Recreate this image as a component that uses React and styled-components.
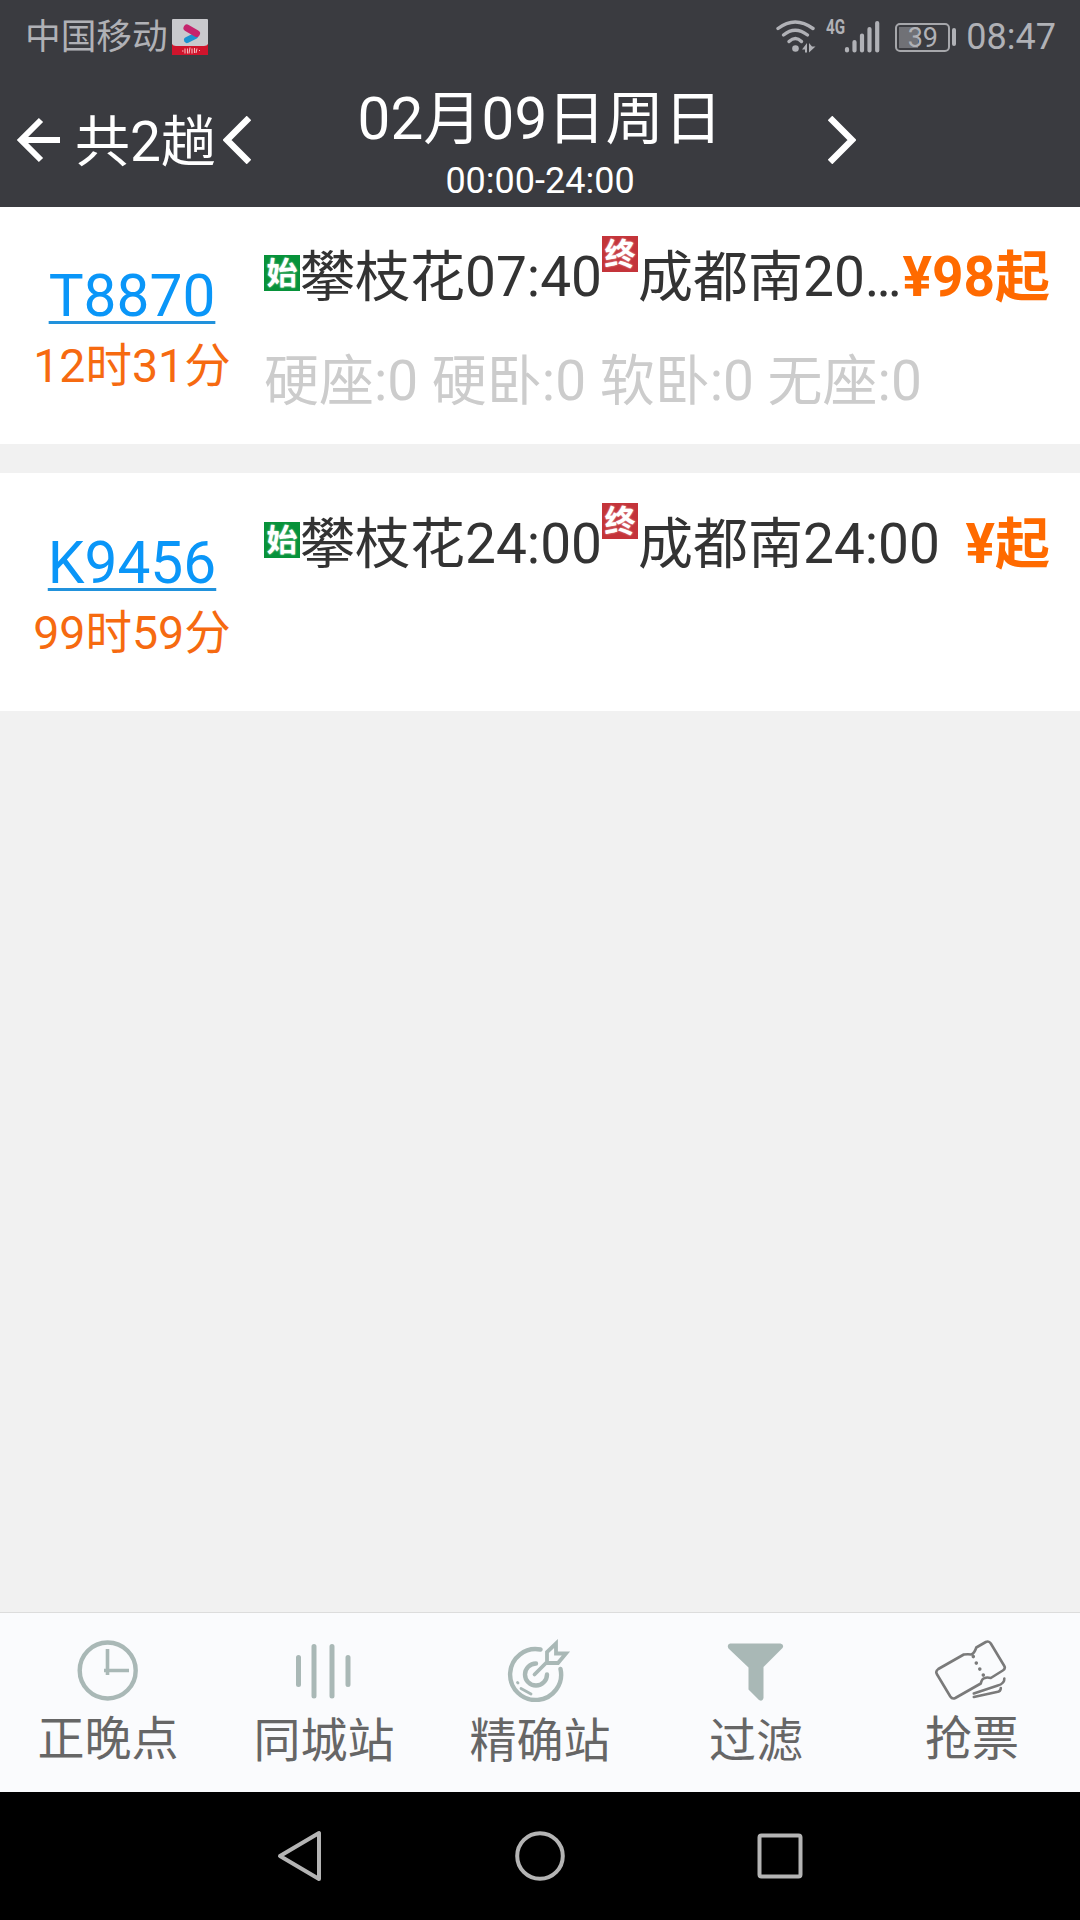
import styled, { createGlobalStyle } from "styled-components";

const GlobalStyle = createGlobalStyle`
  * {
    box-sizing: border-box;
  }
  body {
    margin: 0;
    background: #f1f1f1;
    font-family: Roboto, "Noto Sans CJK SC", sans-serif;
  }
  svg {
    display: block;
    flex: none;
  }
`;

const Page = styled.div`
  width: 1080px;
  height: 1920px;
  display: flex;
  flex-direction: column;
  overflow: hidden;
`;

const Header = styled.header`
  height: 206.6px;
  background: #3a3b40;
  color: #fff;
`;
const StatusBar = styled.div`
  display: flex;
  align-items: center;
  height: 74px;
  padding: 0 24px 0 25px;
  color: #b0b1b6;
  font-size: 36px;
  line-height: 74px;
`;
const Carrier = styled.span`
  font-weight: 400;
  font-size: 35.7px;
  line-height: 76px;
  margin-right: 4px;
`;
const StatusIcons = styled.div`
  display: flex;
  align-items: center;
  margin-left: auto;
`;
const Network = styled.span`
  align-self: flex-start;
  margin: 15px -1px 0 10px;
  width: 19px;
  font-size: 20px;
  font-weight: 700;
  line-height: 24px;
  transform: scaleX(0.76);
  transform-origin: left;
`;
const Battery = styled.div`
  width: 55px;
  height: 29px;
  margin-left: 15px;
  border: 2px solid #a6a7ab;
  border-radius: 5px;
  background: linear-gradient(#707176, #707176) 2px 2px / 19px 21px no-repeat;
  font-size: 27px;
  line-height: 26px;
  text-align: center;
`;
const BatteryTip = styled.div`
  width: 4px;
  height: 18px;
  margin: 0 10px 0 2px;
  border-radius: 2px;
  background: #b0b1b6;
`;

const TitleBar = styled.div`
  display: grid;
  grid-template-columns: 252px 576px 252px;
`;
const Back = styled.div`
  display: flex;
  align-items: center;
  height: 132px;
  padding-left: 16px;
`;
const Count = styled.span`
  width: 148px;
  margin-left: 14px;
  padding-top: 4px;
  font-size: 55px;
  font-weight: 400;
  line-height: 60px;
  white-space: nowrap;
`;
const Next = styled.div`
  display: flex;
  align-items: center;
  height: 132px;
`;
const DateBox = styled.div`
  padding-top: 14.5px;
  text-align: center;
`;
const DateText = styled.div`
  font-size: 58.4px;
  line-height: 60px;
`;
const TimeRange = styled.div`
  margin-top: 8px;
  font-size: 36px;
  line-height: 48px;
`;

const List = styled.main`
  flex: 1;
  display: flex;
  flex-direction: column;
  gap: 29px;
`;
const Card = styled.article`
  display: flex;
  height: 237.6px;
  background: #fff;
`;
const Summary = styled.div`
  width: 264px;
  padding-top: 59.4px;
  text-align: center;
`;
const TrainNo = styled.div`
  color: #0a96f8;
  font-size: 58.6px;
  line-height: 60px;
  text-decoration: underline #2192dc 3px;
  text-underline-offset: 5px;
  text-decoration-skip-ink: none;
`;
const Duration = styled.div`
  margin-top: 15px;
  color: #f66a10;
  font-size: 46.5px;
  line-height: 50px;
`;
const Detail = styled.div`
  flex: 1;
  padding: 40.7px 30px 0 0;
`;
const Route = styled.div`
  display: flex;
  height: 60px;
  color: #333;
  font-size: 55px;
  line-height: 60px;
  white-space: nowrap;
`;
const Badge = styled.span`
  flex: none;
  width: 36px;
  height: 36px;
  margin-top: ${({ $end }) => ($end ? "-11px" : "8px")};
  background: ${({ $end }) => ($end ? "#c4343a" : "#07923a")};
  color: #fff;
  font-size: 31px;
  font-weight: 700;
  line-height: 37px;
  text-align: center;
  text-shadow: 0 0 2px rgba(255, 255, 255, 0.7);
`;
const Price = styled.strong`
  margin-left: auto;
  color: #ff6a00;
  font-size: 55px;
  font-weight: 700;
`;
const Seats = styled.div`
  margin-top: 44px;
  color: #ccc;
  font-size: 55px;
  line-height: 60px;
  white-space: pre;
`;

const TabBar = styled.nav`
  display: grid;
  grid-template-columns: repeat(5, 1fr);
  height: 180px;
  border-top: 1px solid #dcdcdc;
  background: #fafbfd;
`;
const Tab = styled.div`
  display: flex;
  flex-direction: column;
  align-items: center;
  padding-top: 21px;
  color: #666;
`;
const TabLabel = styled.span`
  margin-top: ${({ $low }) => ($low ? "9px" : "7px")};
  font-size: 47px;
  line-height: 60px;
`;

const NavBar = styled.div`
  display: flex;
  justify-content: center;
  align-items: center;
  gap: 180px;
  height: 128px;
  background: #000;
`;

const AppLogo = () => (
  <svg width="36" height="36" viewBox="0 0 36 36">
    <rect width="36" height="36" rx="1" fill="#c9c9cd" />
    <path d="M0 25q1 2 4 2h28q3 0 4-2v11H0z" fill="#d0142c" />
    <path d="M15 21l8-4" stroke="#1a93d0" strokeWidth="6" strokeLinecap="round" />
    <path d="M15 9l9.500 5.500" stroke="#c5246c" strokeWidth="7" strokeLinecap="round" />
    <path
      d="M10 32h1.500M13 29.500v5M15.500 29.500v5M18 28.500l-1 6M20 29.500v5M22.500 29v5M25 29.500l-1 4.500M27 31.500h1"
      stroke="#f3b9bd"
      strokeWidth="1.100"
    />
  </svg>
);

const WifiIcon = () => (
  <svg width="40" height="34" viewBox="0 0 40 34" fill="none" stroke="#b0b1b6" strokeWidth="3.400" strokeLinecap="round">
    <path d="M2 8.500Q19 -4.500 37 8.500" />
    <path d="M7.500 15Q19 5.500 31.500 15" />
    <path d="M13 21.500Q19.500 15.500 25.500 21.500" />
    <circle cx="19.500" cy="28.500" r="3.300" fill="#b0b1b6" stroke="none" />
    <path d="M26 29.500L31 23v9.500h-2v-3zM33 23v9.500l6.500-6h-3.500z" fill="#b0b1b6" stroke="none" />
  </svg>
);

const SignalIcon = () => (
  <svg width="36" height="34" viewBox="0 0 36 34" stroke="#b0b1b6" strokeWidth="4.200" strokeLinecap="round">
    <path d="M3 29v1.500M10.500 22v8.500M18 15.500v15M25.500 9v21.500M33.200 3v27.500" />
  </svg>
);

const BackArrow = () => (
  <svg width="45" height="46" viewBox="0 0 45 46" fill="none" stroke="#fff" strokeWidth="6">
    <path d="M25 3L5 23l20 20M4 23h40" />
  </svg>
);

const Chevron = ({ right }) => (
  <svg width="28" height="48" viewBox="0 0 28 48" fill="none" stroke="#fff" strokeWidth="6.500">
    <path d={right ? "M2 2l22 22L2 46" : "M26 2L4 24l22 22"} />
  </svg>
);

const tabIcon = { width: 76, height: 68, viewBox: "0 0 76 68", fill: "none" };

const ClockIcon = () => (
  <svg {...tabIcon} stroke="#a9b8b6">
    <circle cx="37.700" cy="36.500" r="28" strokeWidth="4.400" />
    <path d="M37.500 15v26M34 36.500h25" strokeWidth="3.600" />
  </svg>
);

const BarsIcon = () => (
  <svg {...tabIcon} stroke="#a9b8b6" strokeWidth="5" strokeLinecap="round">
    <path d="M12.500 23.500v27M28 12.500v49.500M46 12.500v49.500M62 23.500v27" />
  </svg>
);

const TargetIcon = () => (
  <svg {...tabIcon} stroke="#a9b8b6" strokeWidth="4.400" strokeLinecap="round">
    <path d="M38.500 15.500A25.500 25.500 0 1 0 58.500 35" />
    <path d="M34 29.500A11 11 0 1 0 45 40.500" />
    <path d="M32.500 40.500L45 28M45 28V18L54 9.500V19.500H64L56 29H45" strokeWidth="3.800" />
    <path d="M19 54.500l10 5.500M15.500 48.500l.500.500" strokeWidth="2.800" />
  </svg>
);

const FunnelIcon = () => (
  <svg {...tabIcon}>
    <path
      d="M12 9.500h50.500q4 1 2 4.500L45.500 33V64q-1 4-4.500 2L30.500 55.500V33.500L10.500 14.500q-2-4 1.500-5z"
      fill="#a9b8b6"
    />
  </svg>
);

const TicketIcon = () => (
  <svg {...tabIcon} stroke="#7a7a7a" strokeWidth="2.600" strokeLinecap="round" strokeLinejoin="round">
    <g transform="translate(-1.200 -0.500)">
      <path d="M31 21L5.500 35.500q-3 2-1.500 5L17.500 63q2 3 5 1.500L48 50q1-5 4-5.500 2-1 6 0L70 37q3-2 1.500-4.500L58 10q-2-3-5-1.500L43.500 14q-2 6-5 7-3-.5-7.500 0z" />
      <path d="M40.500 23v.1M43.500 29.500v.1M47 35.500v.1M50.500 41.500v.1" strokeWidth="3.600" />
      <path d="M41 60l24-8q7-2 6.500-7M41 63.500l23-5q4-.5 4-4" />
    </g>
  </svg>
);

const trains = [
  {
    no: "T8870",
    duration: "12时31分",
    from: "攀枝花07:40",
    to: "成都南20…",
    price: "¥98起",
    seats: "硬座:0 硬卧:0 软卧:0 无座:0",
  },
  {
    no: "K9456",
    duration: "99时59分",
    from: "攀枝花24:00",
    to: "成都南24:00",
    price: "¥起",
  },
];

const tabs = [
  { label: "正晚点", Icon: ClockIcon },
  { label: "同城站", Icon: BarsIcon, low: true },
  { label: "精确站", Icon: TargetIcon, low: true },
  { label: "过滤", Icon: FunnelIcon, low: true },
  { label: "抢票", Icon: TicketIcon },
];

const App = () => {
  return (
    <Page>
      <GlobalStyle />
      <Header>
        <StatusBar>
          <Carrier>中国移动</Carrier>
          <AppLogo />
          <StatusIcons>
            <WifiIcon />
            <Network>4G</Network>
            <SignalIcon />
            <Battery>39</Battery>
            <BatteryTip />
            <span>08:47</span>
          </StatusIcons>
        </StatusBar>
        <TitleBar>
          <Back>
            <BackArrow />
            <Count>共2趟</Count>
            <Chevron />
          </Back>
          <DateBox>
            <DateText>02月09日周日</DateText>
            <TimeRange>00:00-24:00</TimeRange>
          </DateBox>
          <Next>
            <Chevron right />
          </Next>
        </TitleBar>
      </Header>
      <List>
        {trains.map((train) => (
          <Card key={train.no}>
            <Summary>
              <TrainNo>{train.no}</TrainNo>
              <Duration>{train.duration}</Duration>
            </Summary>
            <Detail>
              <Route>
                <Badge>始</Badge>
                <span>{train.from}</span>
                <Badge $end>终</Badge>
                <span>{train.to}</span>
                <Price>{train.price}</Price>
              </Route>
              {train.seats && <Seats>{train.seats}</Seats>}
            </Detail>
          </Card>
        ))}
      </List>
      <TabBar>
        {tabs.map(({ label, Icon, low }) => (
          <Tab key={label}>
            <Icon />
            <TabLabel $low={low}>{label}</TabLabel>
          </Tab>
        ))}
      </TabBar>
      <NavBar>
        <svg width="60" height="60" viewBox="0 0 60 60" fill="none" stroke="#b4b4b4" strokeWidth="4" strokeLinejoin="round">
          <path d="M49 7v46L10 30z" />
        </svg>
        <svg width="60" height="60" viewBox="0 0 60 60" fill="none" stroke="#b4b4b4" strokeWidth="4">
          <circle cx="30" cy="30" r="22.800" />
        </svg>
        <svg width="60" height="60" viewBox="0 0 60 60" fill="none" stroke="#b4b4b4" strokeWidth="4">
          <rect x="9.500" y="9.500" width="41" height="41" rx="2" />
        </svg>
      </NavBar>
    </Page>
  );
};

export default App;
